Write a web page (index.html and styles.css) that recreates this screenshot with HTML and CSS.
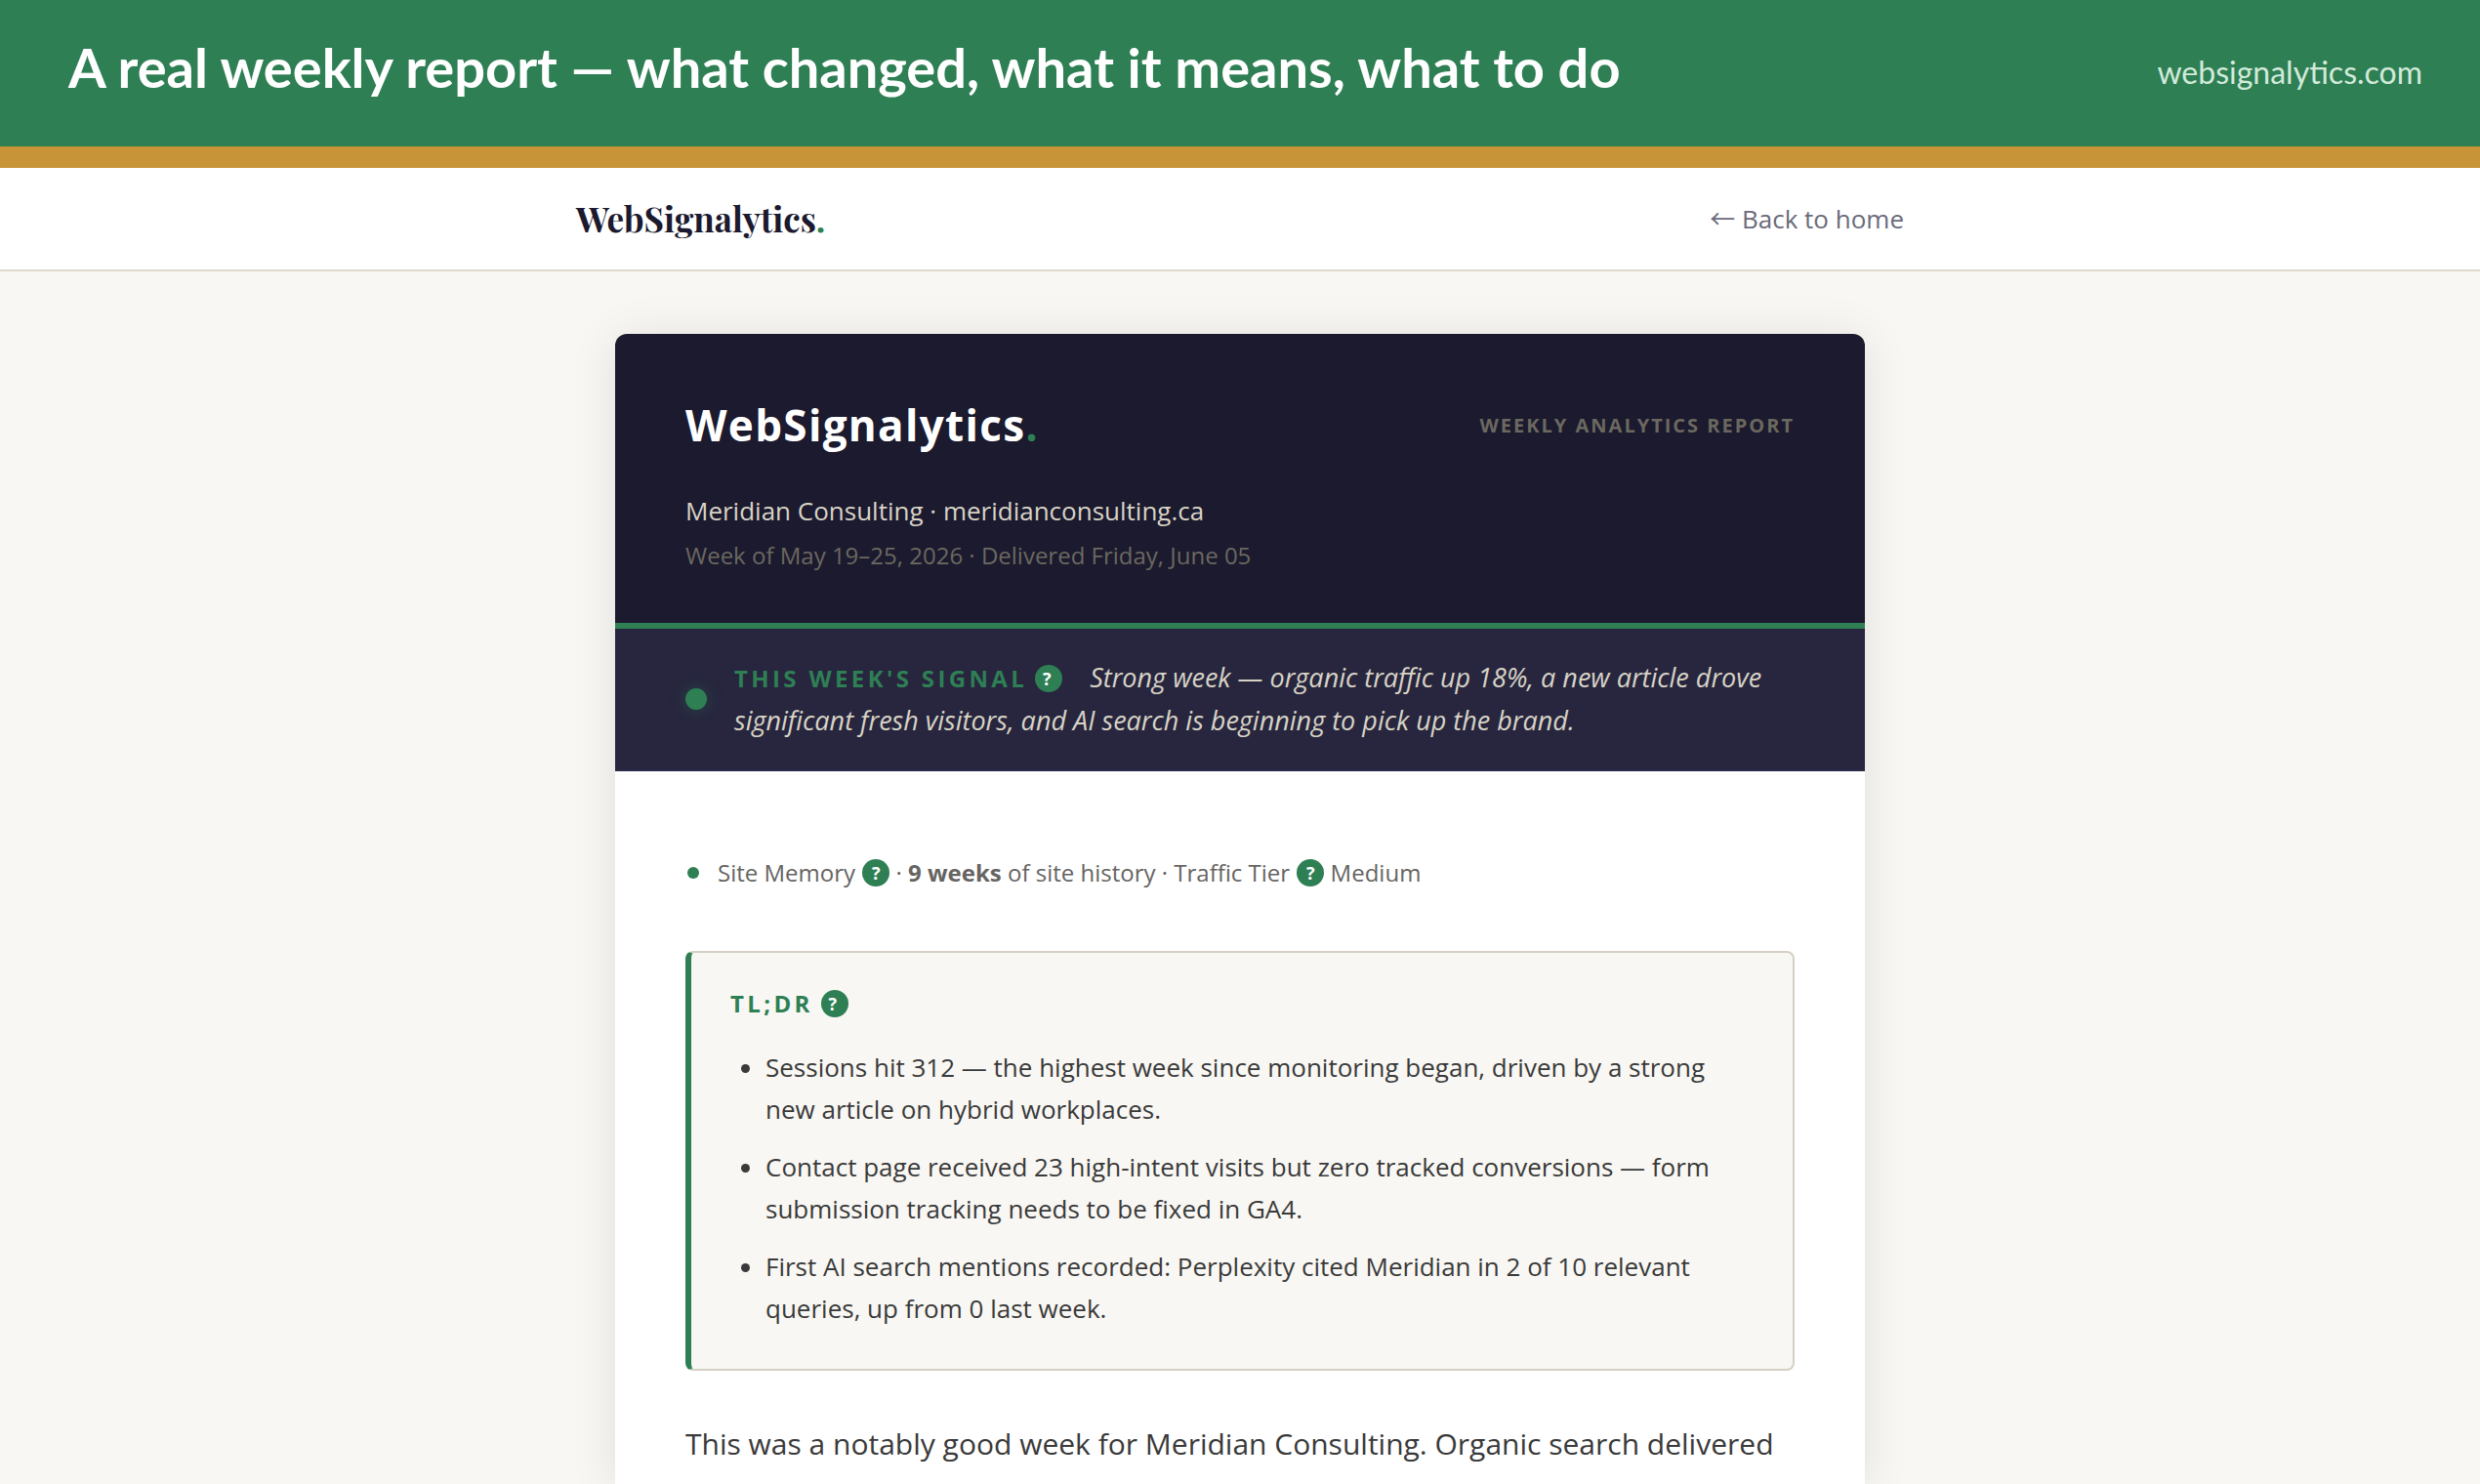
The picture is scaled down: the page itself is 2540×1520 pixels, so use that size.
FILE: index.html
```html
<!DOCTYPE html>
<html lang="en">
<head>
<meta charset="utf-8">
<title>WebSignalytics – Weekly report</title>
<link rel="stylesheet" href="styles.css">
</head>
<body>
<header class="banner">
  <h1 class="banner-title">A real weekly report — what changed, what it means, what to do</h1>
  <a class="banner-link" href="#">websignalytics.com</a>
</header>
<nav class="nav">
  <div class="nav-inner">
    <a class="nav-logo" href="#">WebSignalytics<span class="accent">.</span></a>
    <a class="nav-back" href="#">← Back to home</a>
  </div>
</nav>
<main class="main">
  <article class="card">
    <header class="report-head">
      <div class="report-top">
        <div class="report-brand">WebSignalytics<span class="accent">.</span></div>
        <div class="report-kind">WEEKLY ANALYTICS REPORT</div>
      </div>
      <p class="report-client">Meridian Consulting · meridianconsulting.ca</p>
      <p class="report-dates">Week of May 19–25, 2026 · Delivered Friday, June 05</p>
    </header>
    <section class="signal">
      <span class="signal-dot"></span>
      <p class="signal-text"><span class="signal-label">THIS WEEK'S SIGNAL</span><button class="help help-label help-signal" type="button">?</button><em>Strong week — organic traffic up 18%, a new article drove significant fresh visitors, and AI search is beginning to pick up the brand.</em></p>
    </section>
    <div class="report-body">
      <div class="memory">
        <span class="memory-dot"></span>
        <p>Site Memory <button class="help" type="button">?</button> · <strong>9 weeks</strong> of site history · Traffic Tier <button class="help" type="button">?</button> Medium</p>
      </div>
      <section class="tldr">
        <h2 class="tldr-title">TL;DR<button class="help help-label" type="button">?</button></h2>
        <ul class="tldr-list">
          <li>Sessions hit 312 — the highest week since monitoring began, driven by a strong new article on hybrid workplaces.</li>
          <li>Contact page received 23 high-intent visits but zero tracked conversions — form submission tracking needs to be fixed in GA4.</li>
          <li>First AI search mentions recorded: Perplexity cited Meridian in 2 of 10 relevant queries, up from 0 last week.</li>
        </ul>
      </section>
      <p class="summary">This was a notably good week for Meridian Consulting. Organic search delivered</p>
    </div>
  </article>
</main>
</body>
</html>
```
FILE: styles.css
```css
:root {
  --green: #2e7f54;
  --gold: #c79538;
  --ink: #1b1a2e;
  --paper: #f8f7f3;
  --line: #d5cfc4;
}

* {
  box-sizing: border-box;
}

body {
  margin: 0;
  min-height: 100vh;
  display: flex;
  flex-direction: column;
  background: var(--paper);
  color: #3a3a3a;
  font-family: "Open Sans", "Noto Sans", sans-serif;
  font-size: 26px;
}

p, h1, h2, ul {
  margin: 0;
}

a {
  color: inherit;
  text-decoration: none;
}

.accent {
  color: var(--green);
}

.banner {
  display: flex;
  align-items: center;
  justify-content: space-between;
  padding: 35px 59px 47px 70px;
  border-bottom: 22px solid var(--gold);
  background: var(--green);
  font-family: Lato, sans-serif;
}

.banner-title {
  color: #fff;
  font-size: 56px;
  font-weight: 700;
  line-height: 68px;
}

.banner-link {
  padding-top: 8px;
  color: #d2ead9;
  font-size: 32px;
}

.nav {
  background: #fff;
  border-bottom: 2px solid #e0d9cc;
}

.nav-inner {
  display: flex;
  align-items: center;
  justify-content: space-between;
  max-width: 1360px;
  height: 104px;
  margin: 0 auto;
  padding-bottom: 2px;
}

.nav-logo {
  color: var(--ink);
  font-family: "Playfair Display", "Liberation Serif", serif;
  font-size: 35px;
  font-weight: 700;
}

.nav-back {
  color: #6b6b7b;
  font-family: "Open Sans", "Noto Sans CJK SC", sans-serif;
}

.main {
  flex: 1;
  display: flex;
  justify-content: center;
  padding-top: 64px;
}

.card {
  width: 1280px;
  border-radius: 12px 12px 0 0;
  background: #fff;
  box-shadow: 0 4px 48px rgba(0, 0, 0, 0.1);
}

.report-head {
  padding: 64px 72px 52px;
  border-bottom: 6px solid var(--green);
  border-radius: 12px 12px 0 0;
  background: var(--ink);
}

.report-top {
  display: flex;
  align-items: center;
  justify-content: space-between;
  margin-bottom: 40px;
}

.report-brand {
  color: #fff;
  font-size: 44px;
  font-weight: 700;
  line-height: 58px;
  letter-spacing: 0.03em;
}

.report-kind {
  color: #6b6860;
  font-size: 20px;
  font-weight: 700;
  letter-spacing: 2px;
}

.report-client {
  margin-bottom: 10px;
  color: #d8d3c6;
  line-height: 38px;
}

.report-dates {
  color: #6b6860;
  font-size: 24px;
  line-height: 34px;
}

.signal {
  display: flex;
  align-items: center;
  gap: 28px;
  padding: 28px 72px;
  border-bottom: 2px solid #2d2b4a;
  background: #27263e;
}

.signal-dot {
  flex: none;
  width: 22px;
  height: 22px;
  border-radius: 50%;
  background: var(--green);
  box-shadow: 0 0 16px rgba(46, 127, 84, 0.4);
}

.signal-text {
  color: #d8d3c6;
  font-size: 27px;
  line-height: 44px;
}

.signal-label {
  color: var(--green);
  font-size: 24px;
  font-weight: 700;
  line-height: 24px;
  letter-spacing: 0.14em;
}

.help {
  display: inline-flex;
  align-items: center;
  justify-content: center;
  width: 28px;
  height: 28px;
  margin: 0 0 0 1px;
  padding: 0;
  border: 0;
  border-radius: 50%;
  background: var(--green);
  color: #fff;
  font-family: inherit;
  font-size: 18px;
  font-weight: 700;
  line-height: 28px;
  vertical-align: 2px;
}

.help-label {
  margin-left: 8px;
  letter-spacing: 4px;
}

.help-signal {
  margin-right: 28px;
}

.report-body {
  padding: 84px 72px 0;
}

.memory {
  display: flex;
  align-items: center;
  gap: 19px;
  margin-bottom: 60px;
  padding-left: 2px;
  color: #666462;
  font-size: 24px;
  line-height: 40px;
}

.memory-dot {
  width: 12px;
  height: 12px;
  border-radius: 50%;
  background: var(--green);
}

.tldr {
  margin-bottom: 48px;
  padding: 36px 40px 40px;
  border: 2px solid var(--line);
  border-left: 6px solid var(--green);
  border-radius: 8px;
  background: var(--paper);
}

.tldr-title {
  margin-bottom: 28px;
  color: var(--green);
  font-size: 24px;
  font-weight: 700;
  line-height: 32px;
  letter-spacing: 0.14em;
}

.tldr-list {
  display: grid;
  gap: 16px;
  padding-left: 36px;
  line-height: 43px;
}

.summary {
  font-size: 30px;
  line-height: 54px;
}
```
